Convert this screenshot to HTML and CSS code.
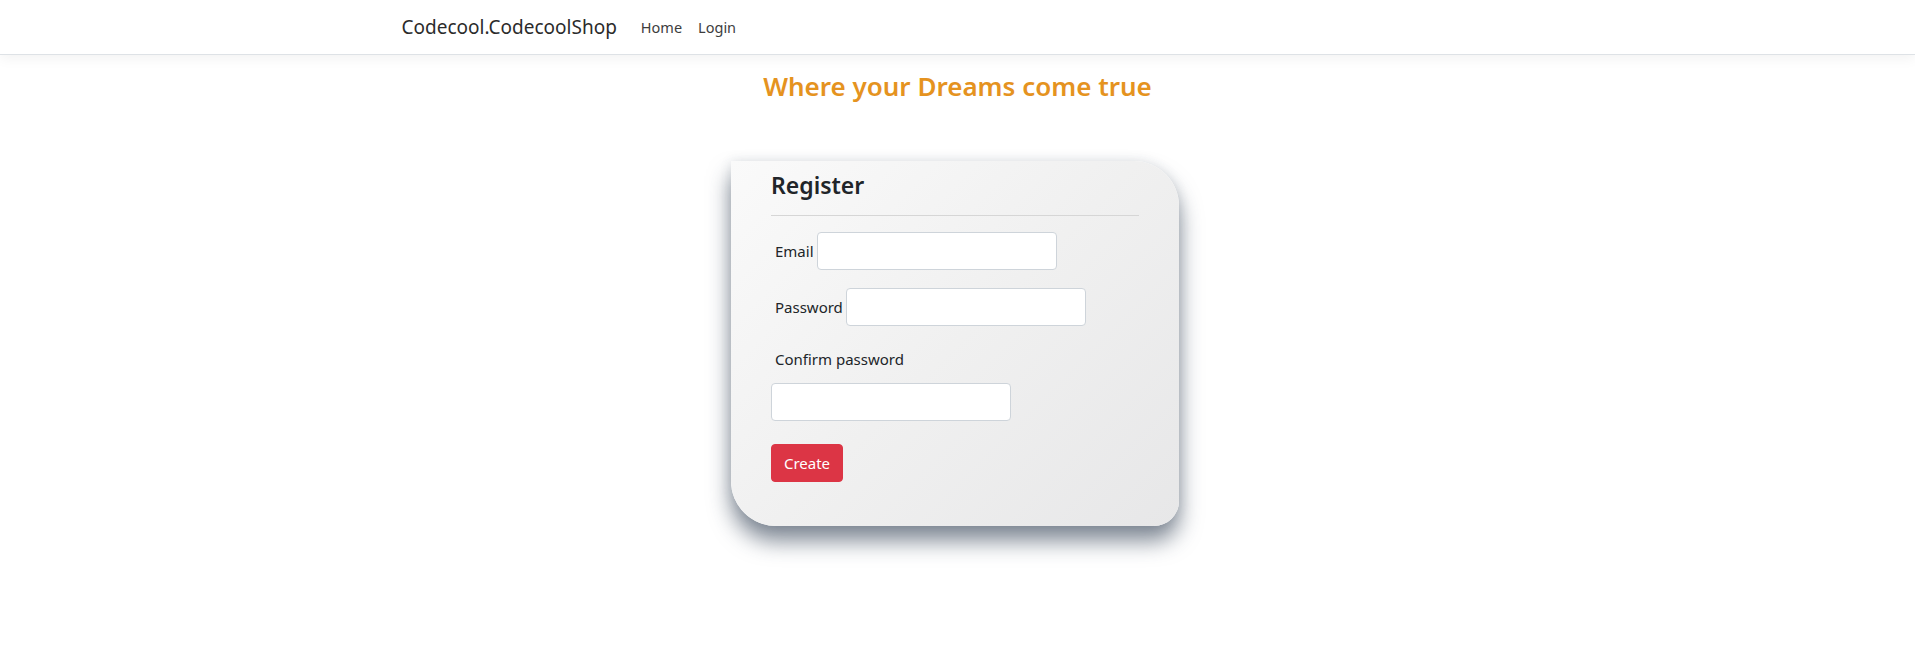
FILE: index.html
```html
<!DOCTYPE html>
<html lang="en">
<head>
<meta charset="utf-8">
<title>Register - Codecool.CodecoolShop</title>
<link rel="stylesheet" href="styles.css">
</head>
<body>
<header class="navbar">
  <div class="container nav-inner">
    <a class="brand" href="#">Codecool.CodecoolShop</a>
    <nav class="nav-links">
      <a class="nav-link" href="#">Home</a>
      <a class="nav-link" href="#">Login</a>
    </nav>
  </div>
</header>
<main class="main">
  <h2 class="tagline">Where your Dreams come true</h2>
  <section class="card">
    <h4 class="card-title">Register</h4>
    <hr class="divider">
    <form class="form">
      <div class="row-inline">
        <label class="label" for="email">Email</label>
        <input class="input" id="email" type="email">
      </div>
      <div class="row-inline">
        <label class="label" for="pw">Password</label>
        <input class="input" id="pw" type="password">
      </div>
      <div class="row-stack">
        <label class="label" for="cpw">Confirm password</label>
        <input class="input" id="cpw" type="password">
      </div>
      <button class="btn-danger" type="button">Create</button>
    </form>
  </section>
</main>
</body>
</html>
```
FILE: styles.css
```css
* { box-sizing: border-box; }
html, body { margin: 0; padding: 0; }
body {
  min-height: 100vh;
  font-family: "Noto Sans", "Open Sans", sans-serif;
  font-size: 15px;
  color: #212529;
  background: #fff;
}
a { text-decoration: none; }

.navbar {
  height: 55px;
  border-bottom: 1px solid #dee2e6;
  box-shadow: 0 4px 12px rgba(0, 0, 0, 0.05);
  background: #fff;
}
.container {
  width: 1140px;
  margin: 0 auto;
  padding: 0 15px;
}
.nav-inner {
  height: 100%;
  display: flex;
  align-items: center;
}
.brand {
  font-size: 19px;
  color: #2b2b2b;
  margin-left: -1px;
  margin-right: 16px;
}
.nav-links { display: flex; }
.nav-link {
  font-size: 14.5px;
  color: #3d3d3d;
  padding: 0 8px;
}

.main {
  display: flex;
  flex-direction: column;
  align-items: center;
  padding-bottom: 80px;
}
.tagline {
  margin: 16px 0 0;
  font-size: 26px;
  font-weight: 600;
  line-height: 1.2;
  color: #e5931f;
}
.card {
  margin-top: 59px;
  margin-right: 5px;
  width: 448px;
  padding: 11px 40px 44px;
  border-radius: 0 45px 25px 45px;
  background: linear-gradient(135deg, #fafafa 0%, #f0f0f0 50%, #e7e7e8 100%);
  box-shadow: 0 15px 22px rgba(45, 60, 80, 0.6), 0 0 12px rgba(60, 70, 90, 0.12);
}
.card-title {
  margin: 0;
  font-size: 23px;
  font-weight: 600;
  line-height: 1.2;
  color: #212529;
}
.divider {
  margin: 15px 0 16px;
  border: 0;
  border-top: 1px solid #d6d6d6;
}
.form {
  display: flex;
  flex-direction: column;
  align-items: flex-start;
}
.row-inline {
  display: flex;
  align-items: center;
  gap: 3px;
  margin-bottom: 18px;
}
.row-stack {
  display: flex;
  flex-direction: column;
  align-items: flex-start;
  gap: 14px;
  margin-top: 5px;
  margin-bottom: 23px;
}
.label {
  padding-left: 4px;
  font-size: 15px;
  line-height: 1.362;
  color: #212529;
}
.input {
  width: 240px;
  height: 38px;
  border: 1px solid #ced4da;
  border-radius: 4px;
  background: #fff;
  font: inherit;
  padding: 6px 12px;
}
.btn-danger {
  width: 72px;
  height: 38px;
  border: 1px solid #dc3545;
  border-radius: 4px;
  background: #dc3545;
  color: #fff;
  font-family: inherit;
  font-size: 15px;
  padding: 0;
}
```
